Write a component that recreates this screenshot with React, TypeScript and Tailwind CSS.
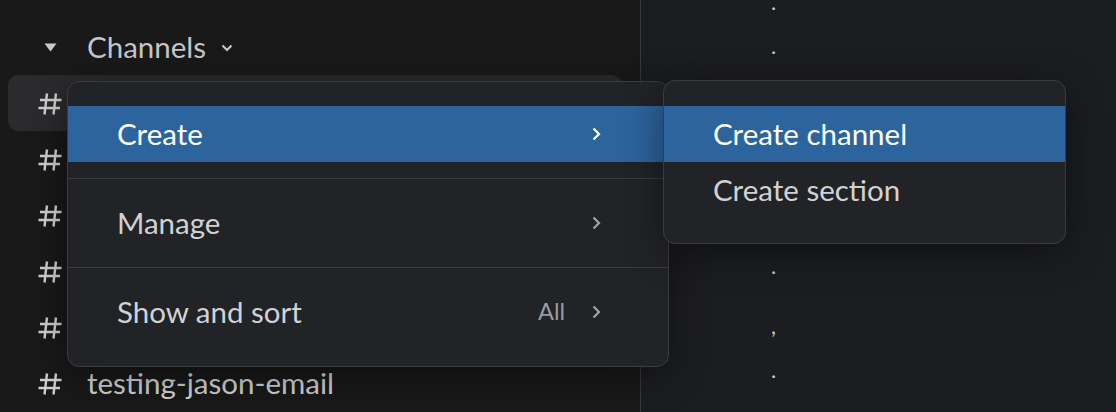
const channels = ["", "", "", "", "", "testing-jason-email"];

function Hash() {
  return (
    <svg width="26" height="24" viewBox="0 0 26 24" className="mr-[24px] mt-[2px] shrink-0">
      <path
        d="M10 1.5L7.5 22.5M19 1.5L16.5 22.5M3 8h21.5M1.5 16h21.5"
        fill="none"
        stroke="#d1d2d3"
        strokeWidth="2.4"
      />
    </svg>
  );
}

function Chevron({ active }: { active?: boolean }) {
  return (
    <svg width="9" height="14" viewBox="0 0 9 14" className="shrink-0">
      <path d="M1.5 1.5l5.5 5.5l-5.5 5.5" fill="none" stroke={active ? "#ffffff" : "#a3a4a7"} strokeWidth="2.2" />
    </svg>
  );
}

function MenuItem({ label, active, hint, arrow }: { label: string; active?: boolean; hint?: string; arrow?: boolean }) {
  return (
    <div
      className={`flex h-[56px] items-center pl-[49px] pr-[67px] text-[29.5px] ${
        active ? "bg-[#2c649e] text-white" : "text-[#d1d2d3]"
      }`}
    >
      <span className="flex-1">{label}</span>
      {hint && <span className="mr-[27px] text-[23.5px] text-[#9a9b9e]">{hint}</span>}
      {arrow && <Chevron active={active} />}
    </div>
  );
}

export default function App() {
  return (
    <div
      className="relative flex h-[412px] w-[1116px] overflow-hidden bg-[#1c1d21]"
      style={{ fontFamily: "Lato, 'Noto Sans', sans-serif" }}
    >
      <aside className="w-[641px] shrink-0 border-r border-[#38393c] bg-[#19191a] pt-5">
        <div className="flex h-[55px] items-center pl-[44px]">
          <svg width="13" height="9" viewBox="0 0 13 9" className="mr-[30px]">
            <path d="M0.5 0.5h12L6.5 8.5z" fill="#c8c9ca" />
          </svg>
          <span className="text-[29.5px] text-[#c6c7c8]">Channels</span>
          <svg width="12" height="8" viewBox="0 0 12 8" className="ml-[15px]">
            <path d="M1.5 1.5l4.5 4.5l4.5-4.5" fill="none" stroke="#c6c7c8" strokeWidth="2.2" />
          </svg>
        </div>
        <div className="flex flex-col">
          {channels.map((name, i) => (
            <div
              key={i}
              className={`mx-[8px] flex h-[56px] w-[614px] items-center rounded-[10px] pl-[29px] ${
                i === 0 ? "bg-[#2b2b2d]" : ""
              }`}
            >
              <Hash />
              <span className="text-[29.5px] text-[#d1d2d3]">{name}</span>
            </div>
          ))}
        </div>
      </aside>

      <div className="flex flex-1 flex-col pl-[130px] text-[22px] leading-[4px] text-[#c8c9ca]">
        <span>.</span>
        <span className="mt-[40px]">.</span>
        <span className="mt-[216px]">.</span>
        <span className="mt-[56px]">,</span>
        <span className="mt-[40px]">.</span>
      </div>

      <div className="absolute left-[67px] top-[81px] w-[602px] rounded-[12px] border border-[#3b3c40] bg-[#222327] pt-[24px] pb-[26px] shadow-[0_8px_40px_rgba(0,0,0,0.45)]">
        <div className="pb-4">
          <MenuItem label="Create" active arrow />
        </div>
        <div className="border-t border-[#3b3c40] py-4">
          <MenuItem label="Manage" arrow />
        </div>
        <div className="border-t border-[#3b3c40] pt-4">
          <MenuItem label="Show and sort" hint="All" arrow />
        </div>
      </div>

      <div className="absolute left-[663px] top-[80px] w-[403px] rounded-[12px] border border-[#3b3c40] bg-[#222327] pt-[25px] pb-[25px] shadow-[0_8px_40px_rgba(0,0,0,0.45)]">
        <MenuItem label="Create channel" active />
        <MenuItem label="Create section" />
      </div>
    </div>
  );
}
